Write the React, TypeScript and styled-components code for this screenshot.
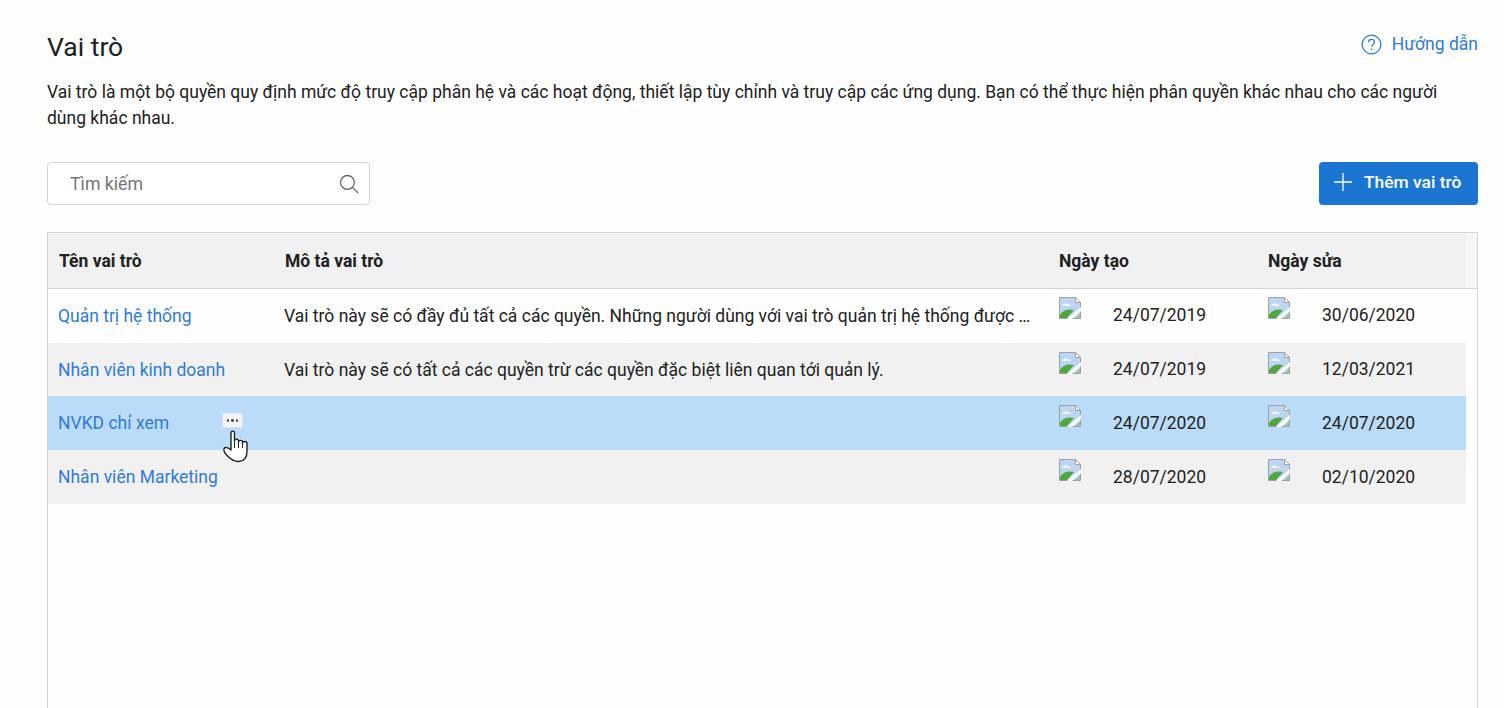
import * as React from 'react';
import styled, { createGlobalStyle } from 'styled-components';

const GlobalStyle = createGlobalStyle`
  html, body {
    margin: 0;
    height: 100%;
    overflow: hidden;
    background: #fefefe;
    font-family: Roboto, "Liberation Sans", sans-serif;
    color: #212121;
  }
  * { box-sizing: border-box; }
`;

const Page = styled.div`
  display: flex;
  flex-direction: column;
  height: 708px;
  padding: 28px 26px 0 47px;
`;

const TitleRow = styled.div`
  display: flex;
  justify-content: space-between;
  align-items: flex-start;
  height: 51px;
`;

const Title = styled.h1`
  margin: 0;
  font-size: 26.5px;
  line-height: 38px;
  font-weight: 400;
  color: #212121;
`;

const Help = styled.a`
  display: flex;
  align-items: center;
  gap: 10px;
  height: 32px;
  font-size: 17.5px;
  color: #2f7bd6;
`;

const Description = styled.p`
  margin: 0;
  font-size: 17.5px;
  line-height: 26px;
  color: #212121;
  width: 1410px;
`;

const Toolbar = styled.div`
  display: flex;
  justify-content: space-between;
  margin-top: 31px;
`;

const Search = styled.div`
  display: flex;
  align-items: center;
  justify-content: space-between;
  width: 323px;
  height: 43px;
  padding: 0 10px 0 22px;
  background: #fff;
  border: 1px solid #d5d5d5;
  border-radius: 4px;
  font-size: 17.7px;
  color: #757575;
`;

const AddButton = styled.button`
  display: flex;
  align-items: center;
  gap: 12px;
  width: 159px;
  height: 43px;
  padding: 0 0 3px 15px;
  background: #1b75d3;
  border: 0;
  border-radius: 4px;
  font-family: inherit;
  font-size: 17.4px;
  font-weight: 500;
  color: #fff;
`;

const Table = styled.div`
  flex: 1;
  margin-top: 27px;
  border: 1px solid #d5d5d5;
  border-bottom: 0;
  background: #fefefe;
`;

const columns = '226px 775px 209px 208px';

const HeaderBar = styled.div`
  display: flex;
  height: 56px;
  border-bottom: 1px solid #d5d5d5;
`;

const HeaderRow = styled.div`
  display: grid;
  grid-template-columns: ${columns};
  flex: 1;
  align-items: center;
  padding-top: 1px;
  background: #f1f1f3;
`;

const Gutter = styled.div`
  width: 11px;
  background: #f6f6f6;
`;

const HeaderCell = styled.div`
  padding-left: 11px;
  font-size: 17.5px;
  font-weight: 700;
  color: #212121;

  &:nth-child(n + 3) {
    padding-left: 10px;
  }
`;

const Body = styled.div`
  width: 1418px;
`;

const DateCell = styled.div`
  display: flex;
  align-items: flex-start;
  padding: 9px 0 0 10px;
  font-size: 17.5px;
`;

const DateText = styled.span`
  margin: 8px 0 0 32px;
  line-height: 20px;
`;

const Row = styled.div<{ $tone: 'plain' | 'grey' | 'active' }>`
  display: grid;
  grid-template-columns: ${columns};
  height: 54px;
  background: ${p =>
    p.$tone === 'active' ? '#bbdcf9' : p.$tone === 'grey' ? '#f1f1f2' : 'transparent'};

  &:first-child ${DateCell} {
    padding-top: 8px;
  }

  &:nth-child(2) {
    height: 53px;
  }

  &:nth-child(2) ${DateText} {
    margin-top: 7px;
  }
`;

const NameCell = styled.div`
  position: relative;
  display: flex;
  align-items: center;
  padding-left: 10px;
  font-size: 17.5px;
  color: #2f7bd6;
`;

const DescCell = styled.div`
  align-self: center;
  padding: 0 18px 0 10px;
  font-size: 17.5px;
  white-space: nowrap;
  overflow: hidden;
  text-overflow: ellipsis;
`;

const MoreButton = styled.div`
  position: absolute;
  left: 174px;
  top: 17px;
  display: flex;
  align-items: center;
  justify-content: center;
  gap: 2px;
  width: 21px;
  height: 15px;
  background: #f4f4f4;
  border: 1px solid #dfe3e8;
  border-radius: 2px;
`;

const Dot = styled.i`
  width: 2.5px;
  height: 2.5px;
  border-radius: 50%;
  background: #555;
`;

const HandCursor = styled.div`
  position: absolute;
  left: 175px;
  top: 34px;
  line-height: 0;
`;

const HelpIcon = () => (
  <svg width="21" height="21" viewBox="0 0 21 21" fill="none" stroke="#2f7bd6" strokeWidth="1.3">
    <circle cx="10.5" cy="10.5" r="9.4" />
    <path d="M7.6 8.2c0-1.7 1.3-2.8 2.9-2.8s2.9 1 2.9 2.6c0 2.4-2.9 2.4-2.9 4.8" />
    <path d="M10.5 14.6v1.4" />
  </svg>
);

const SearchIcon = () => (
  <svg width="20" height="20" viewBox="0 0 20 20" fill="none" stroke="#666" strokeWidth="1.3">
    <circle cx="8.4" cy="8.4" r="6.9" />
    <path d="M13.4 13.4l5.6 5.6" />
  </svg>
);

const PlusIcon = () => (
  <svg width="18" height="18" viewBox="0 0 18 18" stroke="#fff" strokeWidth="1.3">
    <path d="M9 0v18M0 9h18" />
  </svg>
);

const BrokenImage = () => (
  <svg width="22" height="22" viewBox="0 0 22 22">
    <path d="M.5.5h16l5 5v16H.5z" fill="#bcd5f2" stroke="#a0a0a0" />
    <path d="M16.5.5v5h5z" fill="#fff" stroke="#a0a0a0" />
    <path d="M3 9c1-3 4-3.500 6-2 2 0 3 1 3 2H3z" fill="#eef5fc" />
    <path d="M1 21v-3c3-5 8-6.500 14-5l-7 8z" fill="#4fa83d" />
    <path d="M8 22L22 10v4l-9 8z" fill="#fefefe" />
    <path d="M16 21l5-4.500V21z" fill="#9fc2a8" />
  </svg>
);

const Hand = () => (
  <svg width="26" height="33" viewBox="0 0 26 33">
    <path
      d="M8 20V2.800C8 .6 11.500 .6 11.500 2.800V11C11.500 8.500 15.500 8.500 15.500 11V12C15.500 9.800 19.500 9.800 19.500 12V13C19.500 11 24 11 24 13.500V21C24 26.500 22 31 16 31.500C10.500 32 7 28.500 4 25.500C1.500 23 .2 20.500 1.200 18.500C2.200 16.800 5 17.500 8 20Z"
      fill="#fff"
      stroke="#222"
      strokeWidth="1.4"
      strokeLinejoin="round"
    />
    <path d="M11.500 11v7M15.500 12v6M19.500 13v5" stroke="#222" strokeWidth="1" fill="none" />
  </svg>
);

const DateValue = ({ value }: { value: string }) => (
  <DateCell>
    <BrokenImage />
    <DateText>{value}</DateText>
  </DateCell>
);

const rows = [
  {
    name: 'Quản trị hệ thống',
    desc: 'Vai trò này sẽ có đầy đủ tất cả các quyền. Những người dùng với vai trò quản trị hệ thống được phép',
    created: '24/07/2019',
    edited: '30/06/2020',
    tone: 'plain' as const,
  },
  {
    name: 'Nhân viên kinh doanh',
    desc: 'Vai trò này sẽ có tất cả các quyền trừ các quyền đặc biệt liên quan tới quản lý.',
    created: '24/07/2019',
    edited: '12/03/2021',
    tone: 'grey' as const,
  },
  {
    name: 'NVKD chỉ xem',
    desc: '',
    created: '24/07/2020',
    edited: '24/07/2020',
    tone: 'active' as const,
  },
  {
    name: 'Nhân viên Marketing',
    desc: '',
    created: '28/07/2020',
    edited: '02/10/2020',
    tone: 'grey' as const,
  },
];

const App = () => (
  <Page>
    <GlobalStyle />
    <TitleRow>
      <Title>Vai trò</Title>
      <Help>
        <HelpIcon />
        Hướng dẫn
      </Help>
    </TitleRow>
    <Description>
      Vai trò là một bộ quyền quy định mức độ truy cập phân hệ và các hoạt động, thiết lập tùy chỉnh và truy cập
      các ứng dụng. Bạn có thể thực hiện phân quyền khác nhau cho các người dùng khác nhau.
    </Description>
    <Toolbar>
      <Search>
        Tìm kiếm
        <SearchIcon />
      </Search>
      <AddButton>
        <PlusIcon />
        Thêm vai trò
      </AddButton>
    </Toolbar>
    <Table>
      <HeaderBar>
        <HeaderRow>
          <HeaderCell>Tên vai trò</HeaderCell>
          <HeaderCell>Mô tả vai trò</HeaderCell>
          <HeaderCell>Ngày tạo</HeaderCell>
          <HeaderCell>Ngày sửa</HeaderCell>
        </HeaderRow>
        <Gutter />
      </HeaderBar>
      <Body>
        {rows.map(row => (
          <Row key={row.name} $tone={row.tone}>
            <NameCell>
              {row.name}
              {row.tone === 'active' && (
                <>
                  <MoreButton>
                    <Dot />
                    <Dot />
                    <Dot />
                  </MoreButton>
                  <HandCursor>
                    <Hand />
                  </HandCursor>
                </>
              )}
            </NameCell>
            <DescCell>{row.desc}</DescCell>
            <DateValue value={row.created} />
            <DateValue value={row.edited} />
          </Row>
        ))}
      </Body>
    </Table>
  </Page>
);

export default App;
